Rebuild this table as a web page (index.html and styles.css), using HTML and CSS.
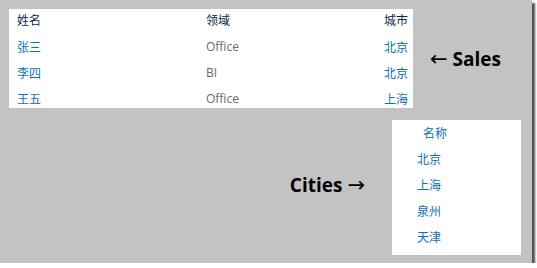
FILE: index.html
```html
<!DOCTYPE html>
<html>
<head>
<meta charset="utf-8">
<link rel="stylesheet" href="styles.css">
</head>
<body>
<div class="frame">
  <div class="top">
    <div class="sales">
      <div class="grid">
        <div class="h">姓名</div><div class="h">领域</div><div class="h r">城市</div>
        <div class="gap"></div><div class="gap"></div><div class="gap"></div>
        <div class="c blue">张三</div><div class="c grey">Office</div><div class="c blue r">北京</div>
        <div class="c blue">李四</div><div class="c grey">BI</div><div class="c blue r">北京</div>
        <div class="c blue">王五</div><div class="c grey">Office</div><div class="c blue r">上海</div>
      </div>
    </div>
    <div class="label sales-label"><span class="arrow">←</span> Sales</div>
  </div>
  <div class="bottom">
    <div class="label cities-label">Cities <span class="arrow">→</span></div>
    <div class="cities">
      <div class="ch">名称</div>
      <div class="cr">北京</div>
      <div class="cr">上海</div>
      <div class="cr">泉州</div>
      <div class="cr">天津</div>
    </div>
  </div>
</div>
</body>
</html>
```
FILE: styles.css
```css
html, body {
  margin: 0;
  padding: 0;
  background: #ffffff;
}
body {
  font-family: "Open Sans", "Noto Sans CJK SC", sans-serif;
  font-size: 12px;
}
.frame {
  width: 532px;
  height: 263px;
  background: #c3c3c3;
  box-shadow: 3px 3px 2px rgba(0, 0, 0, 0.7);
  overflow: hidden;
}
.top {
  display: flex;
  align-items: center;
  padding: 9px 0 0 9px;
}
.sales {
  width: 404px;
  height: 99px;
  background: #ffffff;
}
.grid {
  display: grid;
  grid-template-columns: 189px 1fr auto;
  padding: 1px 5px 0 8px;
}
.h {
  height: 19px;
  line-height: 19px;
  color: #0a2846;
  font-family: "Noto Sans CJK SC", sans-serif;
}
.gap {
  height: 5px;
}
.c {
  height: 26px;
  line-height: 26px;
}
.r {
  text-align: right;
}
.blue {
  color: #0a72bd;
  font-family: "Noto Sans CJK SC", sans-serif;
}
.grey {
  color: #6a6a6a;
  font-family: "Open Sans", sans-serif;
}
.label {
  font-family: "Open Sans", "DejaVu Sans", sans-serif;
  font-weight: 700;
  font-size: 19px;
  color: #000000;
  white-space: nowrap;
}
.arrow {
  font-family: "DejaVu Sans", sans-serif;
  font-weight: 400;
  font-size: 21px;
}
.sales-label {
  margin-left: 17px;
}
.bottom {
  display: flex;
  align-items: center;
  justify-content: flex-end;
  margin-top: 12px;
  padding-right: 11px;
}
.cities-label {
  margin-right: 27px;
  margin-bottom: 5px;
}
.cities {
  width: 129px;
  height: 135px;
  background: #ffffff;
  font-family: "Noto Sans CJK SC", sans-serif;
  color: #0a72bd;
}
.ch {
  height: 26px;
  line-height: 26px;
  padding-left: 31px;
}
.cr {
  height: 26px;
  line-height: 26px;
  padding-left: 25px;
}
```
